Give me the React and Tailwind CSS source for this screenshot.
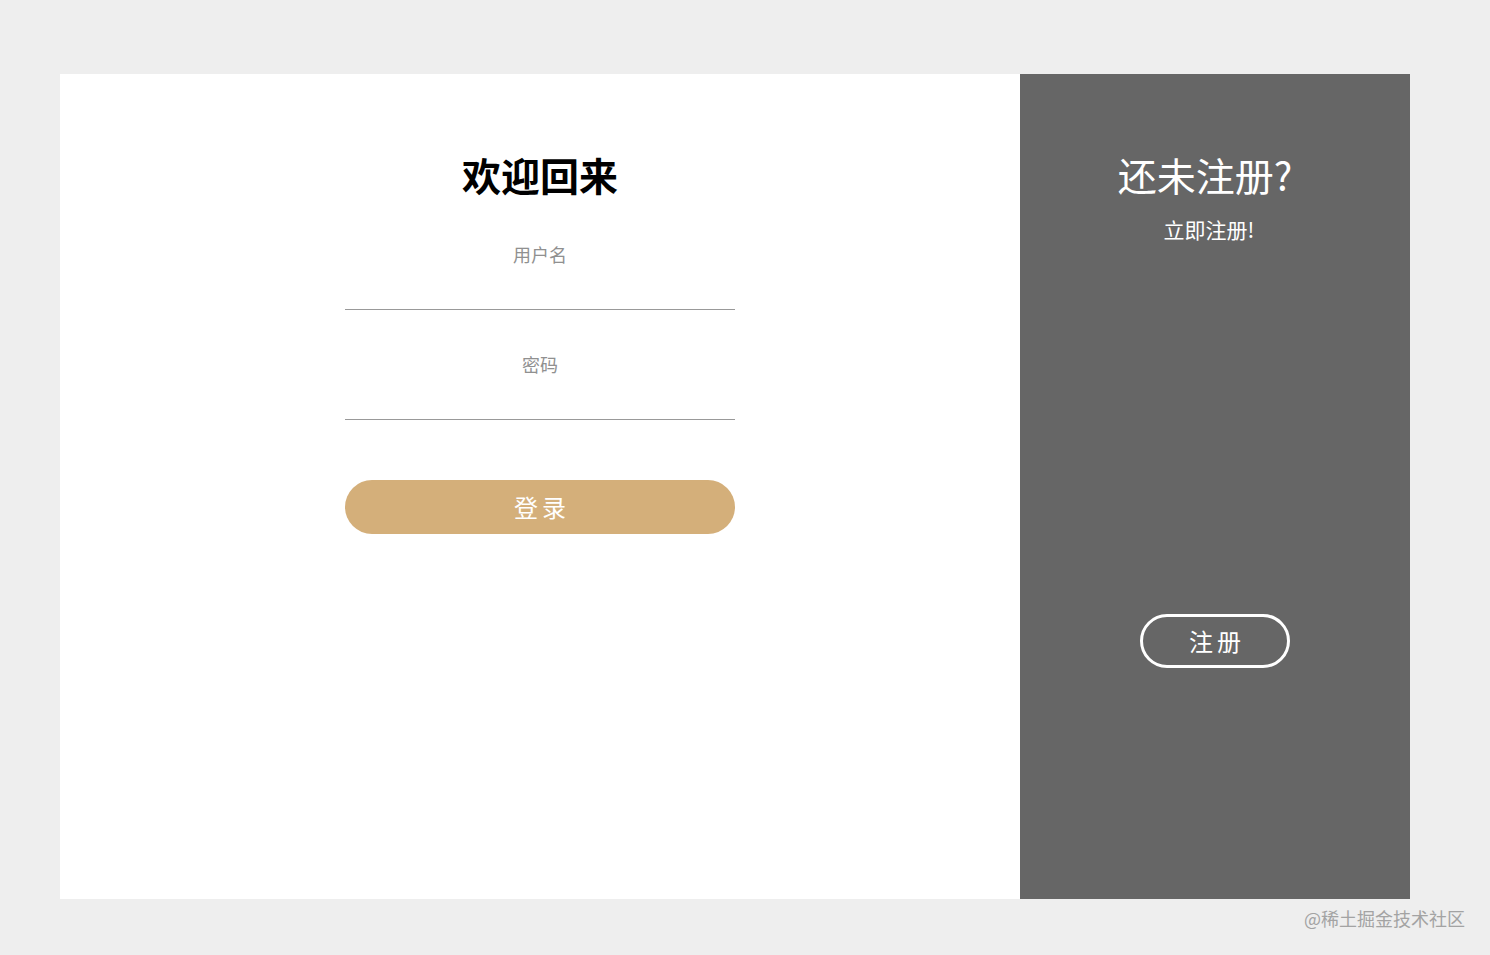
export default function App() {
  const cjk = { fontFamily: '"Noto Sans CJK SC", "Noto Sans", sans-serif' };

  return (
    <div className="relative w-full h-[955px] bg-[#eeeeee] pt-[74px] pl-[60px]" style={cjk}>
      <div className="flex w-[1350px] h-[825px]">
        {/* Login form */}
        <div className="w-[960px] bg-white flex flex-col items-center pt-[76px]">
          <h2 className="text-[39px] leading-[48px] font-bold text-black">欢迎回来</h2>

          <label className="mt-[44px] w-[390px] flex flex-col items-center">
            <span className="text-[18px] leading-[24px] text-[#909090]">用户名</span>
            <input
              type="text"
              className="w-full h-[44px] border-b border-[#999999] outline-none text-center text-[16px]"
            />
          </label>

          <label className="mt-[42px] w-[390px] flex flex-col items-center">
            <span className="text-[18px] leading-[24px] text-[#909090]">密码</span>
            <input
              type="password"
              className="w-full h-[44px] border-b border-[#999999] outline-none text-center text-[16px]"
            />
          </label>

          <button className="mt-[60px] w-[390px] h-[54px] rounded-full bg-[#d4af7a] text-white text-[24px] tracking-[4px] pl-[4px]">
            登录
          </button>
        </div>

        {/* Sign up side */}
        <div className="w-[390px] bg-[#666666] flex flex-col items-center pt-[76px]">
          <h2 className="text-[39px] leading-[48px] text-white pr-[20px]">还未注册?</h2>
          <p className="mt-[17px] text-[21px] leading-[28px] text-white pr-[12px]">立即注册!</p>
          <button className="mt-[371px] w-[150px] h-[54px] rounded-full border-[3px] border-white text-white text-[24px] tracking-[4px] pl-[4px]">
            注册
          </button>
        </div>
      </div>

      <span className="absolute right-[25px] top-[907px] text-[18px] leading-[22px] text-[#a3a3a3]">
        @稀土掘金技术社区
      </span>
    </div>
  );
}
